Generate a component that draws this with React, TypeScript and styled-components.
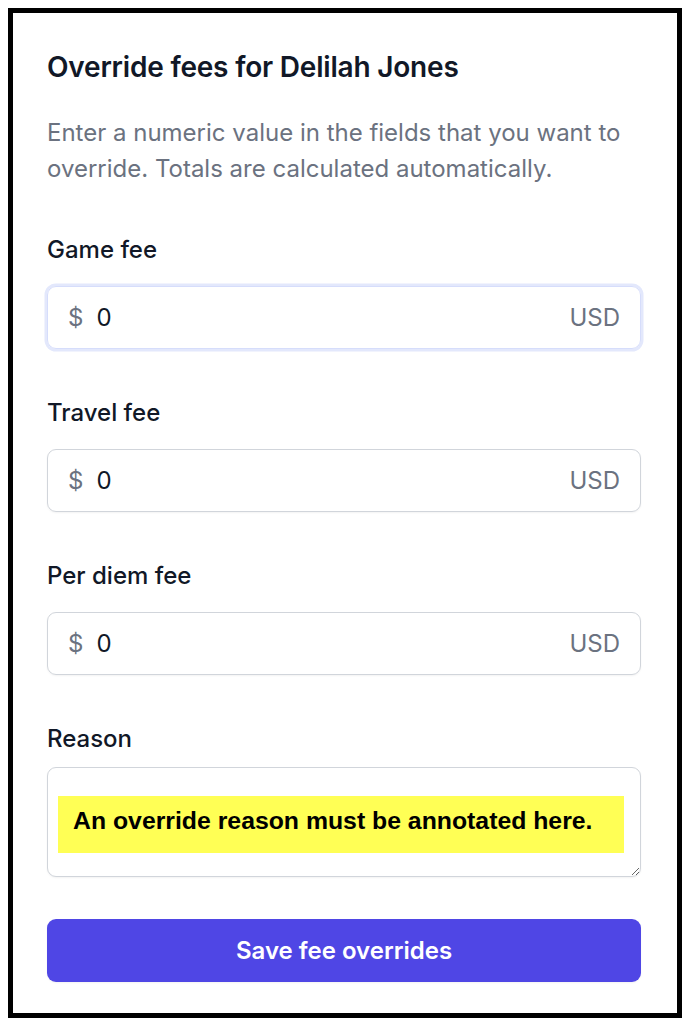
import React from "react";
import styled, { createGlobalStyle } from "styled-components";

const GlobalStyle = createGlobalStyle`
  html, body { margin: 0; padding: 0; background: #ffffff; }
  body { margin: 8px; font-family: Inter, "Noto Sans", sans-serif; }
  * { box-sizing: border-box; }
`;

const Frame = styled.div`
  width: 674px;
  border: 5px solid #000;
  height: 1010px;
  padding: 36px 36px 0 34px;
  background: #fff;
  display: flex;
  flex-direction: column;
`;

const Title = styled.h2`
  margin: 0;
  font-size: 28px;
  line-height: 36px;
  font-weight: 600;
  color: #111827;
  letter-spacing: -0.2px;
`;

const Description = styled.p`
  margin: 30px 0 0;
  font-size: 24px;
  line-height: 36px;
  color: #6b7280;
  font-weight: 400;
`;

const Fields = styled.div`
  margin-top: 48px;
  display: flex;
  flex-direction: column;
  gap: 49px;
`;

const Field = styled.div<{ $gap: number }>`
  display: flex;
  flex-direction: column;
  gap: ${(p) => p.$gap}px;
`;

const Label = styled.label`
  font-size: 24px;
  line-height: 30px;
  font-weight: 500;
  color: #111827;
`;

const InputBox = styled.div<{ $focused?: boolean }>`
  height: 63px;
  border-radius: 9px;
  border: 1.5px solid ${(p) => (p.$focused ? "#d6ddfb" : "#d1d5db")};
  box-shadow: ${(p) =>
    p.$focused ? "0 0 0 2.5px #e3e8fc" : "0 1px 2px rgba(0,0,0,0.05)"};
  display: flex;
  align-items: center;
  padding: 0 20px 0 20px;
  font-size: 24px;
`;

const Prefix = styled.span`
  color: #6b7280;
  margin-right: 13px;
`;

const Value = styled.span`
  color: #111827;
  flex: 1;
`;

const Suffix = styled.span`
  color: #6b7280;
`;

const TextareaWrap = styled.div`
  position: relative;
  height: 110px;
`;

const TextArea = styled.textarea`
  width: 100%;
  height: 110px;
  border: 1.5px solid #d1d5db;
  border-radius: 9px;
  resize: vertical;
  font-family: inherit;
  font-size: 24px;
  padding: 12px 20px;
  box-shadow: 0 1px 2px rgba(0,0,0,0.05);
  display: block;
  outline: none;
`;

const Annotation = styled.div`
  position: absolute;
  left: 11px;
  top: 29px;
  width: 566px;
  height: 57px;
  background: #ffff55;
  display: flex;
  align-items: center;
  padding: 0 0 8px 15px;
  font-family: "Liberation Sans", Arial, sans-serif;
  font-weight: 700;
  font-size: 24.8px;
  color: #000;
  pointer-events: none;
`;

const Button = styled.button`
  margin-top: 42px;
  height: 63px;
  border: none;
  border-radius: 9px;
  background: #4f46e5;
  color: #fff;
  font-family: inherit;
  font-size: 24px;
  font-weight: 600;
  box-shadow: 0 1px 2px rgba(0,0,0,0.05);
  cursor: pointer;
`;

const fees = [
  { label: "Game fee", focused: true },
  { label: "Travel fee", focused: false },
  { label: "Per diem fee", focused: false },
];

export default function App() {
  return (
    <>
      <GlobalStyle />
      <Frame>
        <Title>Override fees for Delilah Jones</Title>
        <Description>
          Enter a numeric value in the fields that you want to override. Totals
          are calculated automatically.
        </Description>
        <Fields>
          {fees.map((f) => (
            <Field key={f.label} $gap={21}>
              <Label>{f.label}</Label>
              <InputBox $focused={f.focused}>
                <Prefix>$</Prefix>
                <Value>0</Value>
                <Suffix>USD</Suffix>
              </InputBox>
            </Field>
          ))}
          <Field $gap={13}>
            <Label>Reason</Label>
            <TextareaWrap>
              <TextArea aria-label="Reason" />
              <Annotation>An override reason must be annotated here.</Annotation>
            </TextareaWrap>
          </Field>
        </Fields>
        <Button>Save fee overrides</Button>
      </Frame>
    </>
  );
}
